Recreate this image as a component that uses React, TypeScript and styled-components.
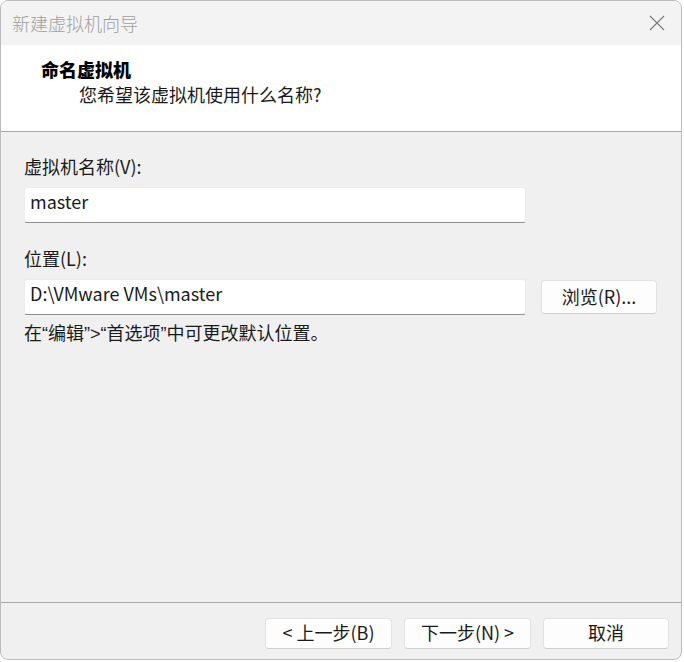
import styled, { createGlobalStyle } from "styled-components";

const GlobalStyle = createGlobalStyle`
	html, body {
		margin: 0;
		padding: 0;
		background: #ffffff;
	}

	* {
		box-sizing: border-box;
	}

	body {
		font-family: "Noto Sans CJK SC", "Noto Sans", sans-serif;
		font-size: 18px;
		color: #1a1a1a;
	}
`;

const WizardWindow = styled.div`
	display: flex;
	flex-direction: column;

	width: 682px;
	height: 660px;

	background: #f0f0f0;
	border: 1px solid #bcbcbc;
	border-radius: 8px;
	overflow: hidden;
`;

const TitleBar = styled.div`
	display: flex;
	align-items: center;
	justify-content: space-between;

	height: 44px;
	padding: 0 16px 0 11px;

	background: #f3f3f3;
`;

const TitleText = styled.span`
	color: #a0a0a0;
	font-size: 18px;
	font-weight: 300;
	line-height: 24px;
`;

const CloseButton = styled.div`
	display: flex;
	align-items: center;
	justify-content: center;

	width: 16px;
	height: 16px;
`;

const Header = styled.div`
	display: flex;
	flex-direction: column;

	height: 87px;
	padding: 12px 0 0 40px;

	background: #ffffff;
	border-bottom: 1px solid #a7a7a7;
`;

const HeaderTitle = styled.div`
	font-weight: 900;
	font-size: 18px;
	line-height: 24px;
	color: #000000;
`;

const HeaderSubtitle = styled.div`
	margin-top: 1px;
	padding-left: 38px;

	font-size: 18px;
	line-height: 24px;
	color: #1a1a1a;
`;

const Body = styled.div`
	display: flex;
	flex-direction: column;
	flex: 1;

	padding: 22px 0 0 23px;
`;

const FieldLabel = styled.label<{ $gap?: number }>`
	display: block;
	margin-top: ${props => props.$gap ?? 0}px;

	font-size: 18px;
	line-height: 24px;
`;

const FieldRow = styled.div`
	display: flex;
	align-items: flex-start;
	gap: 15px;

	margin-top: 9px;
`;

const TextBox = styled.div`
	display: flex;
	align-items: center;

	width: 502px;
	height: 36px;
	padding: 0 5px 9px;

	background: #ffffff;
	border: 1px solid #ececec;
	border-bottom: 1px solid #8f8f8f;
	border-radius: 3px;

	font-size: 18px;
	line-height: 24px;
	color: #1a1a1a;
`;

const Button = styled.div<{ $width: number; $height: number }>`
	display: flex;
	align-items: center;
	justify-content: center;

	width: ${props => props.$width}px;
	height: ${props => props.$height}px;
	margin-top: 1px;
	padding-bottom: 3px;

	background: #fdfdfd;
	border: 1px solid #e2e2e2;
	border-bottom-color: #cfcfcf;
	border-radius: 4px;

	font-size: 18px;
	line-height: 24px;
	color: #1a1a1a;
`;

const Hint = styled.div`
	margin-top: 7px;

	font-family: "Liberation Sans", "Noto Sans CJK SC", sans-serif;
	font-size: 18px;
	line-height: 24px;
`;

const Footer = styled.div`
	display: flex;
	justify-content: flex-end;
	gap: 12px;

	height: 57px;
	padding: 14px 12px 0 0;

	border-top: 1px solid #a7a7a7;
`;

const CloseIcon = () => (
	<svg width="16" height="16" viewBox="0 0 16 16">
		<path d="M1 1 L15 15 M15 1 L1 15" stroke="#7a7a7a" strokeWidth="1.1" fill="none" />
	</svg>
);

export default function App(): JSX.Element {
	return (
		<>
			<GlobalStyle />
			<WizardWindow>
				<TitleBar>
					<TitleText>新建虚拟机向导</TitleText>
					<CloseButton>
						<CloseIcon />
					</CloseButton>
				</TitleBar>

				<Header>
					<HeaderTitle>命名虚拟机</HeaderTitle>
					<HeaderSubtitle>您希望该虚拟机使用什么名称?</HeaderSubtitle>
				</Header>

				<Body>
					<FieldLabel>虚拟机名称(V):</FieldLabel>
					<FieldRow>
						<TextBox>master</TextBox>
					</FieldRow>

					<FieldLabel $gap={23}>位置(L):</FieldLabel>
					<FieldRow>
						<TextBox>D:\VMware VMs\master</TextBox>
						<Button $width={116} $height={34}>浏览(R)...</Button>
					</FieldRow>

					<Hint>在“编辑”&gt;“首选项”中可更改默认位置。</Hint>
				</Body>

				<Footer>
					<Button $width={127} $height={31}>&lt; 上一步(B)</Button>
					<Button $width={127} $height={31}>下一步(N) &gt;</Button>
					<Button $width={126} $height={31}>取消</Button>
				</Footer>
			</WizardWindow>
		</>
	);
}
